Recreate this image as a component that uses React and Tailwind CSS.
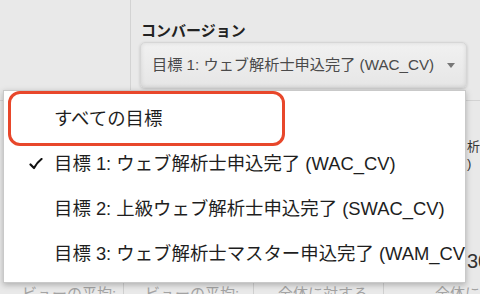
import React from "react";

const goals = [
  { label: "すべての目標", checked: false },
  { label: "目標 1: ウェブ解析士申込完了 (WAC_CV)", checked: true },
  { label: "目標 2: 上級ウェブ解析士申込完了 (SWAC_CV)", checked: false },
  { label: "目標 3: ウェブ解析士マスター申込完了 (WAM_CV)", checked: false },
];

function Check() {
  return (
    <svg width="14" height="12" viewBox="0 0 14 12" className="absolute left-[25px] top-[17px]">
      <path d="M1.5 6.5 L5 10 Q8 4.5 12.5 1" fill="none" stroke="#111" strokeWidth="2.2" strokeLinecap="round" strokeLinejoin="round" />
    </svg>
  );
}

export default function App() {
  return (
    <div className="relative w-[480px] h-[294px] overflow-hidden bg-[#e9e9e9] font-['Liberation_Sans','Noto_Sans_CJK_JP',sans-serif]">
      {/* top: goal selector */}
      <div className="flex h-[101px] border-b border-[#d3d3d3]">
        <div className="w-[131px] shrink-0 border-r border-[#d3d3d3]" />
        <div className="pl-[9px] pt-[21px]">
          <div className="text-[15px] leading-[20px] font-bold text-[#222] pl-[1px]">コンバージョン</div>
          <div className="mt-[1px] w-[327px] h-[46px] rounded-[5px] border border-[#d6d6d6] bg-gradient-to-b from-[#f1f1f1] to-[#e6e6e6] shadow-[inset_0_0_4px_rgba(0,0,0,0.1),0_1px_3px_rgba(0,0,0,0.18)] flex items-center justify-between pl-[11px] pr-[11px]">
            <span className="text-[15.2px] text-[#4a4a4a] whitespace-nowrap">目標 1: ウェブ解析士申込完了 (WAC_CV)</span>
            <span className="w-0 h-0 border-l-[4px] border-r-[4px] border-t-[5px] border-l-transparent border-r-transparent border-t-[#777]" />
          </div>
        </div>
      </div>

      {/* middle: partly hidden report cells */}
      <div className="h-[181px] pl-[467px] pt-[37px] text-[13px] leading-[17px] text-[#333] whitespace-nowrap">
        <div>析士</div>
        <div>)</div>
        <div className="mt-[77px] text-[20px] leading-[24px] text-[#333]">30</div>
      </div>

      {/* bottom labels */}
      <div className="flex text-[15px] leading-[20px] text-[#a3a3a3] whitespace-nowrap">
        <div className="w-[123px] shrink-0 pl-[22px] pt-[2px]">ビューの平均:</div>
        <div className="w-[130px] shrink-0 border-l border-[#cfcfcf] pl-[21px] pt-[2px]">ビューの平均:</div>
        <div className="w-[130px] shrink-0 border-l border-[#cfcfcf] pl-[24px] pt-[2px]">全体に対する</div>
        <div className="w-[130px] shrink-0 border-l border-[#cfcfcf] pl-[51px] pt-[2px]">全体に対する</div>
      </div>

      {/* open dropdown menu */}
      <div className="absolute left-[3px] top-[90px] w-[463px] h-[193px] overflow-hidden bg-white border border-[#c9c9c9] shadow-[0_2px_6px_rgba(0,0,0,0.25)] pt-[5px]">
        {goals.map((g) => (
          <div key={g.label} className="relative h-[45px] flex items-center pl-[50px] text-[18.4px] text-[#1e1e1e] whitespace-nowrap">
            {g.checked && <Check />}
            {g.label}
          </div>
        ))}
      </div>
      <div className="absolute left-[8px] top-[91px] w-[277px] h-[55px] rounded-[12px] border-[3px] border-[#e8472b]" />
    </div>
  );
}
